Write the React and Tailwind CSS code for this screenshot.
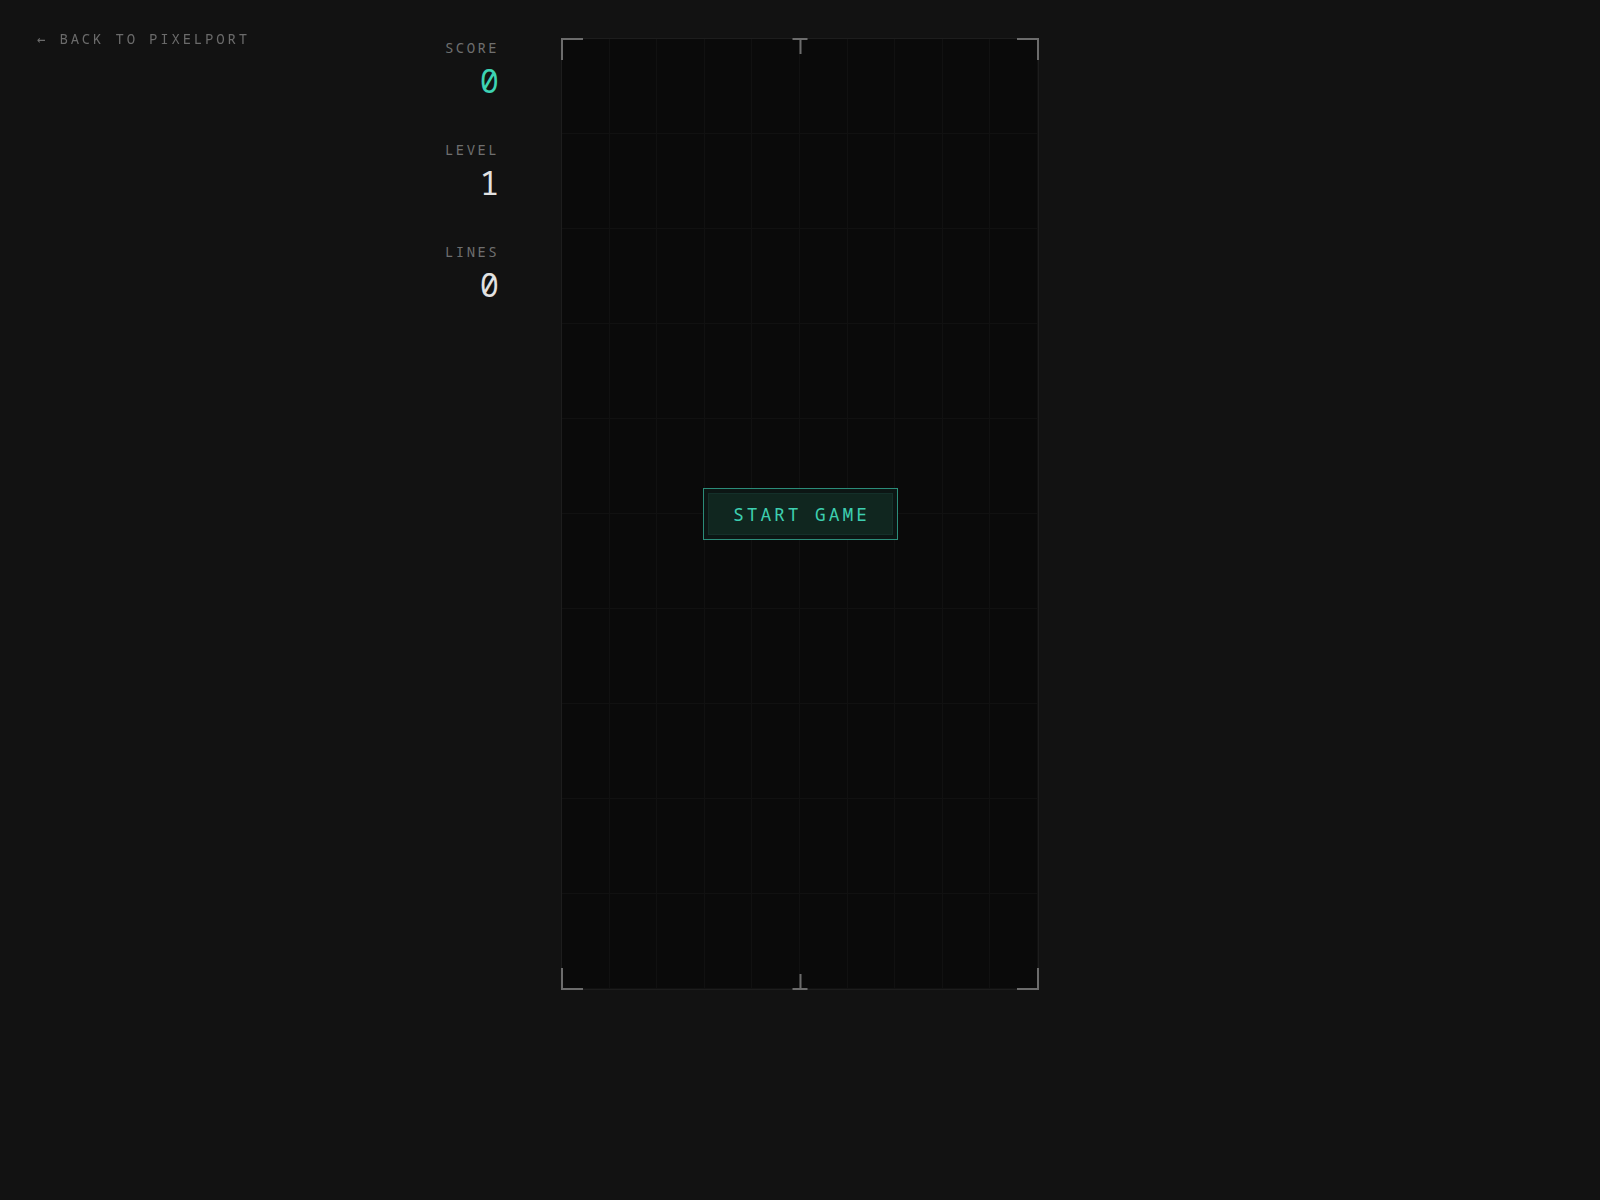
import React from 'react';

const mono = { fontFamily: '"Noto Sans Mono", "DejaVu Sans Mono", monospace' };

const stats = [
  { label: 'SCORE', value: '0', accent: true },
  { label: 'LEVEL', value: '1' },
  { label: 'LINES', value: '0' },
];

const Stat = ({ label, value, accent }) => (
  <div className="flex flex-col items-end">
    <div className="text-[14px] leading-[20px] tracking-[0.17em] text-[#6f6f6f]">{label}</div>
    <div className={`mt-[3px] text-[32px] leading-[40px] ${accent ? 'text-[#3dd3b3]' : 'text-[#e2e2e2]'}`}>
      {value}
    </div>
  </div>
);

const Board = () => {
  const cells = Array.from({ length: 100 });
  return (
    <div className="relative w-[478px] h-[952px] border border-[#1d1d1d] bg-[#0a0a0a]">
      {/* faint cell grid */}
      <div className="grid grid-cols-10 grid-rows-10 w-full h-full">
        {cells.map((_, i) => (
          <div key={i} className="border-r border-b border-[#111111]" />
        ))}
      </div>

      {/* corner brackets */}
      <div className="absolute -top-px -left-px w-[22px] h-[22px] border-t-2 border-l-2 border-[#6c6c6c]" />
      <div className="absolute -top-px -right-px w-[22px] h-[22px] border-t-2 border-r-2 border-[#6c6c6c]" />
      <div className="absolute -bottom-px -left-px w-[22px] h-[22px] border-b-2 border-l-2 border-[#6c6c6c]" />
      <div className="absolute -bottom-px -right-px w-[22px] h-[22px] border-b-2 border-r-2 border-[#6c6c6c]" />

      {/* center ticks */}
      <div className="absolute -top-px left-1/2 -translate-x-1/2 flex flex-col items-center">
        <div className="w-[15px] h-[2px] bg-[#6c6c6c]" />
        <div className="w-[2px] h-[14px] bg-[#6c6c6c]" />
      </div>
      <div className="absolute -bottom-px left-1/2 -translate-x-1/2 flex flex-col items-center">
        <div className="w-[2px] h-[14px] bg-[#6c6c6c]" />
        <div className="w-[15px] h-[2px] bg-[#6c6c6c]" />
      </div>

      {/* start overlay */}
      <div className="absolute inset-0 flex items-center justify-center">
        <button className="border border-[#2b8c79] bg-[#0c1614] p-[4px]">
          <div className="w-[185px] h-[42px] flex items-center justify-center bg-[#10261f] border border-[#14302a]">
            <span className="text-[18px] tracking-[0.16em] pl-[0.16em] text-[#3dcfb0]">START GAME</span>
          </div>
        </button>
      </div>
    </div>
  );
};

export default function App() {
  return (
    <div className="min-h-[1200px] bg-[#121212]" style={mono}>
      <a
        href="#"
        className="fixed top-[29px] left-[37px] text-[14px] leading-[20px] tracking-[0.2em] text-[#6b6b6b]"
      >
        <span style={{ fontFamily: '"DejaVu Sans Mono", monospace' }}>←</span> BACK TO PIXELPORT
      </a>

      <div className="flex justify-center gap-[61px] pt-[38px]">
        <div className="w-[100px] pr-[1px] flex flex-col items-end gap-[39px]">
          {stats.map((s) => (
            <Stat key={s.label} {...s} />
          ))}
        </div>
        <Board />
        <div className="w-[100px]" />
      </div>
    </div>
  );
}
